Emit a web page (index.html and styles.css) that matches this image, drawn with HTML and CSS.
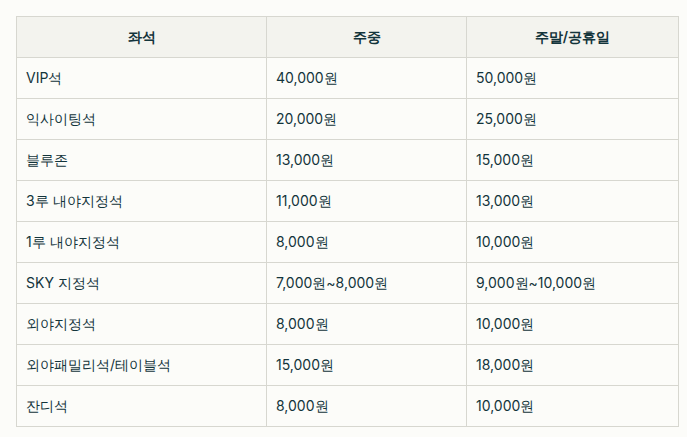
FILE: index.html
```html
<!DOCTYPE html>
<html lang="ko">
<head>
<meta charset="utf-8">
<link rel="stylesheet" href="styles.css">
</head>
<body>
<div class="wrap">
<table class="price">
  <colgroup><col class="c1"><col class="c2"><col class="c3"></colgroup>
  <thead>
    <tr><th>좌석</th><th>주중</th><th>주말/공휴일</th></tr>
  </thead>
  <tbody>
    <tr><td>VIP석</td><td>40,000원</td><td>50,000원</td></tr>
    <tr><td>익사이팅석</td><td>20,000원</td><td>25,000원</td></tr>
    <tr><td>블루존</td><td>13,000원</td><td>15,000원</td></tr>
    <tr><td>3루 내야지정석</td><td>11,000원</td><td>13,000원</td></tr>
    <tr><td>1루 내야지정석</td><td>8,000원</td><td>10,000원</td></tr>
    <tr><td>SKY 지정석</td><td>7,000원~8,000원</td><td>9,000원~10,000원</td></tr>
    <tr><td>외야지정석</td><td>8,000원</td><td>10,000원</td></tr>
    <tr><td>외야패밀리석/테이블석</td><td>15,000원</td><td>18,000원</td></tr>
    <tr><td>잔디석</td><td>8,000원</td><td>10,000원</td></tr>
  </tbody>
</table>
</div>
</body>
</html>
```

FILE: styles.css
```css
html, body {
  margin: 0;
  padding: 0;
  background: #fcfcf9;
}
body {
  font-family: Inter, sans-serif;
  color: #13343b;
  font-size: 14px;
}
.wrap {
  padding: 16px 10px 0 16px;
}
.price {
  border-collapse: collapse;
  table-layout: fixed;
  width: 662px;
}
.c1 { width: 250px; }
.c2 { width: 200px; }
.c3 { width: 212px; }
.price th,
.price td {
  border: 1px solid #d7d7d0;
  height: 41px;
  padding: 0 9px;
  box-sizing: border-box;
  line-height: 20px;
  vertical-align: middle;
}
.price th {
  background: #f3f3ee;
  font-weight: 600;
  text-align: center;
}
.price td {
  text-align: left;
  font-weight: 400;
}
```
